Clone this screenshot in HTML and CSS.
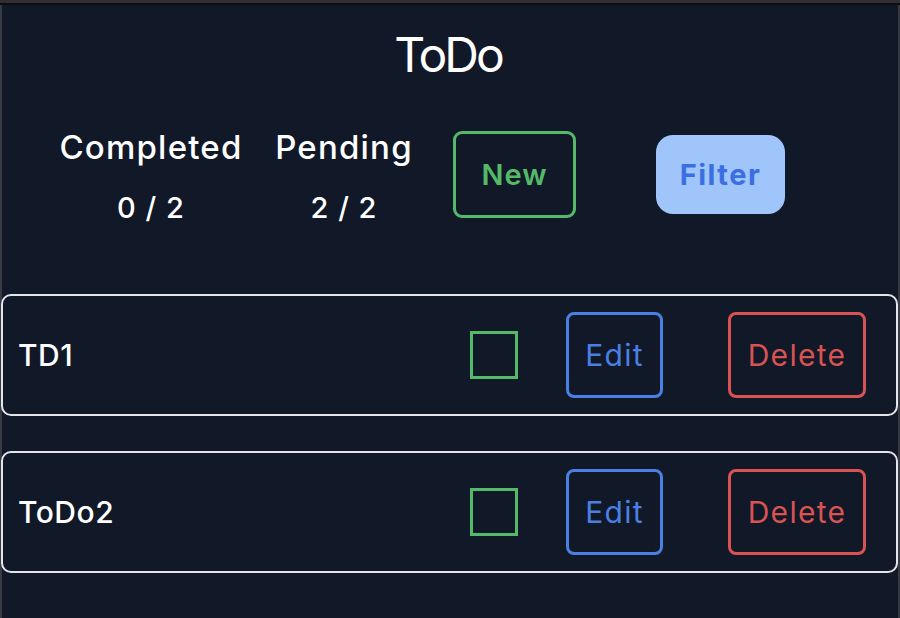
FILE: index.html
```html
<!DOCTYPE html>
<html lang="en">
<head>
<meta charset="utf-8">
<title>ToDo</title>
<link rel="stylesheet" href="styles.css">
</head>
<body>
<div class="chrome-top"></div>
<div class="app">
  <h1 class="title">ToDo</h1>
  <div class="toolbar">
    <div class="stat stat-completed">
      <div class="stat-label">Completed</div>
      <div class="stat-value">0 / 2</div>
    </div>
    <div class="stat stat-pending">
      <div class="stat-label">Pending</div>
      <div class="stat-value">2 / 2</div>
    </div>
    <button class="btn btn-new">New</button>
    <button class="btn btn-filter">Filter</button>
  </div>
  <ul class="list">
    <li class="item">
      <span class="item-name">TD1</span>
      <span class="check"></span>
      <button class="btn btn-edit">Edit</button>
      <button class="btn btn-delete">Delete</button>
    </li>
    <li class="item">
      <span class="item-name">ToDo2</span>
      <span class="check"></span>
      <button class="btn btn-edit">Edit</button>
      <button class="btn btn-delete">Delete</button>
    </li>
  </ul>
</div>
</body>
</html>
```
FILE: styles.css
```css
* { box-sizing: border-box; }
html, body {
  margin: 0;
  padding: 0;
  height: 100%;
  background: #111827;
}
body {
  font-family: Inter, "Noto Sans", sans-serif;
  color: #ffffff;
  overflow: hidden;
}
.chrome-top {
  height: 5px;
  border-top: 3px solid #2f3034;
  background: #0c0d10;
}
.app {
  height: calc(100% - 5px);
  padding-top: 26px;
  border-left: 2px solid #383a41;
  border-right: 2px solid #383a41;
}
.title {
  margin: 0 0 0 -4px;
  text-align: center;
  font-size: 48px;
  line-height: 48px;
  font-weight: 400;
  letter-spacing: -3px;
}
.toolbar {
  display: flex;
  align-items: center;
  margin-top: 48px;
}
.stat {
  text-align: center;
}
.stat-completed { margin-left: 49px; width: 200px; }
.stat-pending { margin-left: 8px; width: 170px; }
.stat-label {
  font-size: 33px;
  line-height: 40px;
  font-weight: 500;
  letter-spacing: 1.2px;
}
.stat-value {
  margin-top: 21px;
  font-size: 29px;
  line-height: 40px;
  font-weight: 500;
  letter-spacing: 1px;
}
.btn {
  font-family: inherit;
  background: transparent;
  cursor: pointer;
  padding: 0;
}
.btn-new {
  margin-left: 24px;
  width: 123px;
  height: 87px;
  margin-bottom: 7px;
  border: 3px solid #55b96a;
  border-radius: 9px;
  color: #55b96a;
  font-size: 29px;
  font-weight: 600;
  letter-spacing: 1px;
}
.btn-filter {
  margin-left: 80px;
  width: 129px;
  height: 79px;
  margin-bottom: 7px;
  border: 0;
  border-radius: 17px;
  background: #9fc5fa;
  color: #3b6ee1;
  font-size: 29px;
  font-weight: 700;
  letter-spacing: 1.5px;
}
.list {
  list-style: none;
  margin: 66px 0 0;
  padding: 0;
  display: flex;
  flex-direction: column;
  gap: 35px;
}
.item {
  display: flex;
  align-items: center;
  height: 122px;
  margin-left: -1px;
  border: 2px solid #e3e5ea;
  border-radius: 10px;
  padding: 0 30px 0 15px;
}
.item-name {
  flex: 1;
  font-size: 30px;
  font-weight: 500;
  letter-spacing: 0.5px;
}
.check {
  width: 48px;
  height: 48px;
  border: 3px solid #55b96a;
}
.btn-edit,
.btn-delete {
  height: 86px;
  border-width: 3px;
  border-style: solid;
  border-radius: 8px;
  font-size: 30px;
  font-weight: 400;
  letter-spacing: 1.3px;
}
.btn-edit {
  margin-left: 48px;
  width: 97px;
  border-color: #4a7fe3;
  color: #4a7fe3;
}
.btn-delete {
  margin-left: 65px;
  width: 138px;
  border-color: #d95353;
  color: #d95353;
}
```
